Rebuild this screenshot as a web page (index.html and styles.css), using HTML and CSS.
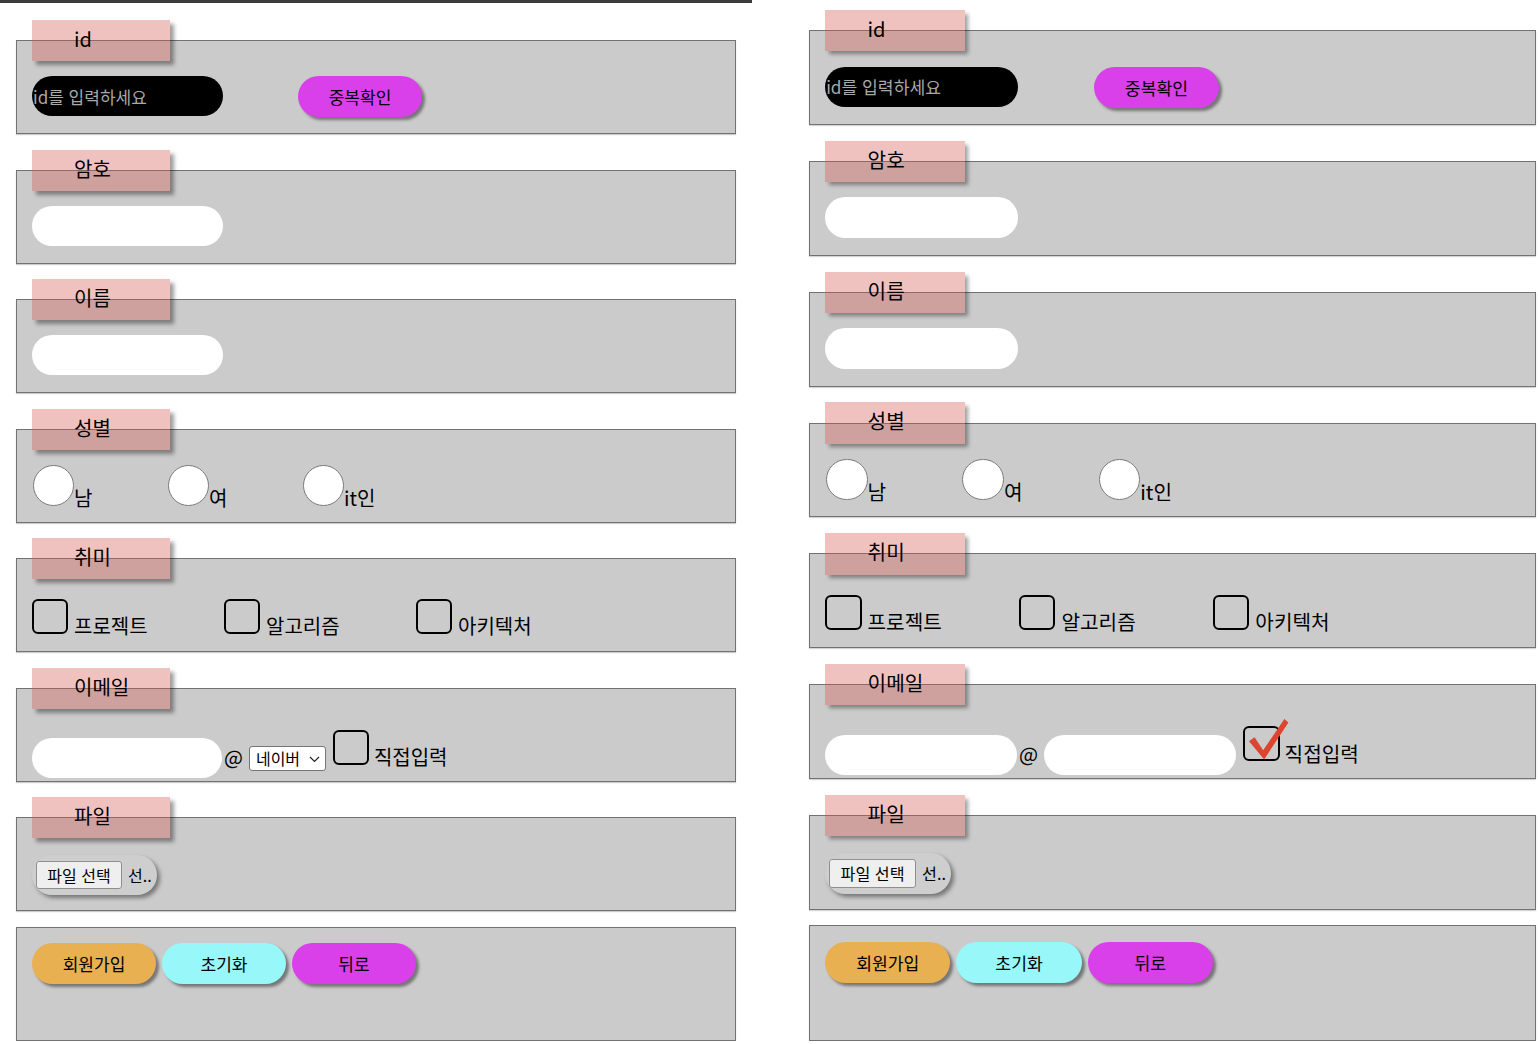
FILE: index.html
```html
<!DOCTYPE html>
<html lang="ko">
<head>
<meta charset="utf-8">
<title>회원가입</title>
<link rel="stylesheet" href="styles.css">
</head>
<body>
<div class="page">
  <div class="panel panel-left">
    <form class="form">
      <section class="field">
        <div class="legend">id</div>
        <div class="box">
          <div class="row">
            <input class="pill pill-dark" type="text" placeholder="id를 입력하세요">
            <button type="button" class="btn btn-magenta btn-dup">중복확인</button>
          </div>
        </div>
      </section>
      <section class="field">
        <div class="legend">암호</div>
        <div class="box"><div class="row"><input class="pill" type="password"></div></div>
      </section>
      <section class="field">
        <div class="legend">이름</div>
        <div class="box"><div class="row"><input class="pill" type="text"></div></div>
      </section>
      <section class="field">
        <div class="legend">성별</div>
        <div class="box">
          <div class="row">
            <label class="opt opt-radio"><input class="radio" type="radio" name="g1"><span class="opt-text">남</span></label>
            <label class="opt opt-radio"><input class="radio" type="radio" name="g1"><span class="opt-text">여</span></label>
            <label class="opt opt-radio"><input class="radio" type="radio" name="g1"><span class="opt-text">it인</span></label>
          </div>
        </div>
      </section>
      <section class="field">
        <div class="legend">취미</div>
        <div class="box">
          <div class="row">
            <label class="opt opt-check"><span class="check"></span><span class="opt-text">프로젝트</span></label>
            <label class="opt opt-check"><span class="check"></span><span class="opt-text">알고리즘</span></label>
            <label class="opt opt-check"><span class="check"></span><span class="opt-text">아키텍처</span></label>
          </div>
        </div>
      </section>
      <section class="field">
        <div class="legend">이메일</div>
        <div class="box">
          <div class="row email-row">
            <input class="pill pill-email" type="text">
            <span class="at">@</span>
            <div class="select">네이버<svg class="chev" width="11" height="7" viewBox="0 0 11 7"><path d="M1 1 L5.5 5.5 L10 1" fill="none" stroke="#222" stroke-width="1.2"/></svg></div>
            <span class="check check-email"></span>
            <span class="email-text">직접입력</span>
          </div>
        </div>
      </section>
      <section class="field">
        <div class="legend">파일</div>
        <div class="box">
          <div class="row">
            <div class="file"><span class="file-btn">파일 선택</span><span class="file-name">선..</span></div>
          </div>
        </div>
      </section>
      <div class="box box-actions">
        <div class="row actions">
          <button type="button" class="btn btn-orange">회원가입</button>
          <button type="button" class="btn btn-cyan">초기화</button>
          <button type="button" class="btn btn-magenta">뒤로</button>
        </div>
      </div>
    </form>
  </div>

  <div class="panel panel-right">
    <form class="form">
      <section class="field">
        <div class="legend">id</div>
        <div class="box">
          <div class="row">
            <input class="pill pill-dark" type="text" placeholder="id를 입력하세요">
            <button type="button" class="btn btn-magenta btn-dup">중복확인</button>
          </div>
        </div>
      </section>
      <section class="field">
        <div class="legend">암호</div>
        <div class="box"><div class="row"><input class="pill" type="password"></div></div>
      </section>
      <section class="field">
        <div class="legend">이름</div>
        <div class="box"><div class="row"><input class="pill" type="text"></div></div>
      </section>
      <section class="field">
        <div class="legend">성별</div>
        <div class="box">
          <div class="row">
            <label class="opt opt-radio"><input class="radio" type="radio" name="g2"><span class="opt-text">남</span></label>
            <label class="opt opt-radio"><input class="radio" type="radio" name="g2"><span class="opt-text">여</span></label>
            <label class="opt opt-radio"><input class="radio" type="radio" name="g2"><span class="opt-text">it인</span></label>
          </div>
        </div>
      </section>
      <section class="field">
        <div class="legend">취미</div>
        <div class="box">
          <div class="row">
            <label class="opt opt-check"><span class="check"></span><span class="opt-text">프로젝트</span></label>
            <label class="opt opt-check"><span class="check"></span><span class="opt-text">알고리즘</span></label>
            <label class="opt opt-check"><span class="check"></span><span class="opt-text">아키텍처</span></label>
          </div>
        </div>
      </section>
      <section class="field">
        <div class="legend">이메일</div>
        <div class="box">
          <div class="row email-row">
            <input class="pill pill-email" type="text">
            <span class="at">@</span>
            <input class="pill pill-email pill-domain" type="text">
            <span class="check check-email check-on"><svg class="tick" width="46" height="44" viewBox="0 0 46 44"><path d="M3 21 L8.5 17 L17 30 L38 -1 L42 2.5 L18 39 Z" fill="#dc4530"/></svg></span>
            <span class="email-text">직접입력</span>
          </div>
        </div>
      </section>
      <section class="field">
        <div class="legend">파일</div>
        <div class="box">
          <div class="row">
            <div class="file"><span class="file-btn">파일 선택</span><span class="file-name">선..</span></div>
          </div>
        </div>
      </section>
      <div class="box box-actions">
        <div class="row actions">
          <button type="button" class="btn btn-orange">회원가입</button>
          <button type="button" class="btn btn-cyan">초기화</button>
          <button type="button" class="btn btn-magenta">뒤로</button>
        </div>
      </div>
    </form>
  </div>
</div>
</body>
</html>
```

FILE: styles.css
```css
html, body {
  margin: 0;
  padding: 0;
  background: #ffffff;
}

body {
  font-family: "Noto Sans CJK KR", "Noto Sans", sans-serif;
  color: #000;
}

.page {
  display: flex;
  align-items: flex-start;
}

.panel-left {
  width: 752px;
  box-sizing: border-box;
  border-top: 3px solid #3d3d3d;
  padding: 17px 16px 0 16px;
}

.panel-right {
  padding: 10px 0 0 57px;
}

.panel-right .form {
  zoom: 1.01;
}

.form {
  width: 720px;
  margin: 0;
}

.field {
  margin-bottom: 15.5px;
}

.legend {
  position: relative;
  z-index: 1;
  width: 138px;
  height: 41px;
  margin-left: 16px;
  box-sizing: border-box;
  padding: 7px 0 0 42px;
  font-size: 20px;
  line-height: 24px;
  background: rgba(213, 86, 77, 0.36);
  box-shadow: 4px 4px 4px rgba(0, 0, 0, 0.38);
}

.box {
  margin-top: -21px;
  height: 94px;
  box-sizing: border-box;
  border: 1px solid #727272;
  background: #cbcbcb;
  padding: 35px 15px 0 15px;
  box-shadow: 0 1px 1px rgba(0, 0, 0, 0.2);
}

.box-actions {
  margin-top: 0;
  height: 114px;
  padding-top: 15px;
}

.row {
  display: flex;
  align-items: flex-start;
}

.pill {
  display: block;
  width: 191px;
  height: 40px;
  box-sizing: border-box;
  border: none;
  border-radius: 20px;
  background: #fff;
  padding: 0;
  margin: 0;
  font-family: "Noto Sans CJK KR", "Noto Sans", sans-serif;
  font-size: 17px;
  outline: none;
}

.pill-dark {
  background: #000;
  color: #fff;
  padding-left: 1px;
}

.pill-dark::placeholder {
  color: #a9a9a9;
  opacity: 1;
}

.btn {
  width: 124px;
  height: 41px;
  border: none;
  border-radius: 20.5px;
  padding: 0;
  margin: 0;
  font-family: "Noto Sans CJK KR", "Noto Sans", sans-serif;
  font-size: 17px;
  color: #000;
  box-shadow: 3px 3px 3px rgba(0, 0, 0, 0.42);
}

.btn-dup {
  margin-left: 75px;
}

.btn-magenta {
  background: #d940ea;
}

.btn-orange {
  background: #e8b051;
}

.btn-cyan {
  background: #98f7f9;
}

.actions {
  gap: 6px;
}

/* radio + checkbox options */
.opt {
  display: flex;
  align-items: flex-end;
  font-size: 20px;
}

.opt-text {
  line-height: 20px;
  margin-bottom: -2px;
}

.opt-radio {
  width: 135px;
  flex: none;
}

.radio {
  appearance: none;
  -webkit-appearance: none;
  width: 41px;
  height: 41px;
  margin: 0 0 0 1px;
  box-sizing: border-box;
  border: 1px solid #7b7b7b;
  border-radius: 50%;
  background: #fff;
}

.opt-check {
  width: 192px;
  flex: none;
  margin-top: 5px;
}

.check {
  position: relative;
  display: block;
  flex: none;
  width: 36px;
  height: 35px;
  box-sizing: border-box;
  border: 2px solid #000;
  border-radius: 6px;
  margin-right: 6px;
}

/* email */
.pill-email {
  width: 190px;
  margin-top: 14px;
}

.at {
  font-size: 20px;
  line-height: 20px;
  margin: 23px 0 0 2px;
}

.select {
  display: flex;
  align-items: center;
  justify-content: space-between;
  width: 77px;
  height: 25px;
  box-sizing: border-box;
  margin: 22px 0 0 6px;
  padding: 0 5px 0 6px;
  border: 1px solid #767676;
  border-radius: 3px;
  background: #fff;
  font-size: 16px;
  line-height: 23px;
}

.chev {
  display: block;
  margin-top: 2px;
}

.pill-domain {
  margin-left: 6px;
}

.check-email {
  margin: 6px 0 0 7px;
  width: 36px;
  height: 35px;
  margin-right: 5px;
}

.check-on {
  margin-top: 5px;
}

.tick {
  position: absolute;
  left: 1px;
  top: -7px;
  overflow: visible;
}

.email-text {
  font-size: 20px;
  line-height: 20px;
  margin-top: 23px;
}

/* file */
.file {
  display: flex;
  align-items: center;
  width: 125px;
  height: 40px;
  margin-top: 2px;
  box-sizing: border-box;
  padding-left: 4px;
  border-radius: 20px;
  background: #cecece;
  box-shadow: 3px 3px 4px rgba(0, 0, 0, 0.42);
  overflow: hidden;
  font-size: 16px;
}

.file-btn {
  flex: none;
  width: 86px;
  height: 28px;
  box-sizing: border-box;
  border: 1px solid #8f8f8f;
  border-radius: 3px;
  background: #efefef;
  line-height: 26px;
  text-align: center;
}

.file-name {
  margin-left: 6px;
  white-space: nowrap;
}
```
